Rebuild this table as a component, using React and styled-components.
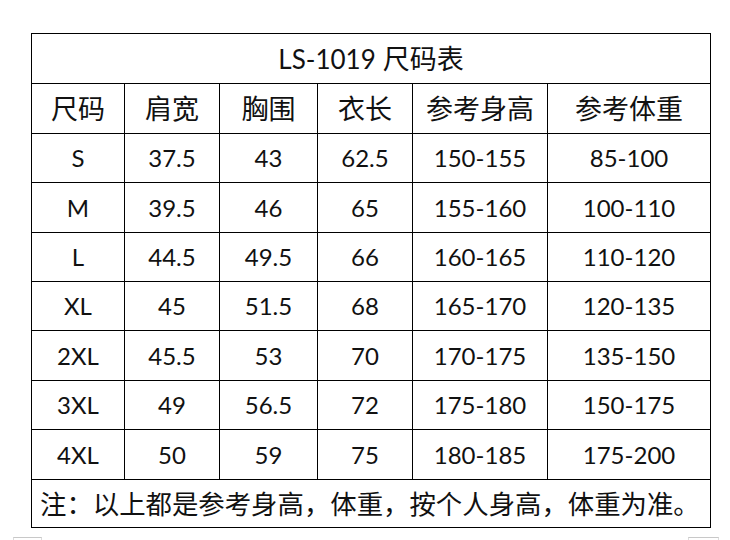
import React from "react";
import styled, { createGlobalStyle } from "styled-components";

const Global = createGlobalStyle`
  html, body { margin: 0; padding: 0; background: #ffffff; }
  body { width: 730px; height: 540px; overflow: hidden; }
`;

const Page = styled.div`
  width: 730px;
  height: 540px;
  box-sizing: border-box;
  padding: 33px 0 0 31px;
  display: flex;
  flex-direction: column;
  position: relative;
  font-family: "Lato", "Noto Sans CJK SC", sans-serif;
  color: #111;
`;

const Grid = styled.div`
  display: grid;
  width: 680px;
  box-sizing: border-box;
  grid-template-columns: 92px 94px 97px 94px 134px 162px;
  grid-template-rows: 49px 49px 48px 49px 48px 48px 49px 48px 49px 47px;
  gap: 1px;
  padding: 1px;
  background: #000;
`;

const Cell = styled.div`
  background: #fff;
  display: flex;
  align-items: center;
  justify-content: center;
  font-size: ${(p) => (p.$cjk ? "27px" : "24px")};
  line-height: 1;
  white-space: nowrap;
`;

const Title = styled.div`
  grid-column: 1 / -1;
  background: #fff;
  display: flex;
  align-items: center;
  justify-content: center;
  font-size: 26px;
  line-height: 1;
`;

const TitleCjk = styled.span`
  font-size: 27px;
  margin-left: 7px;
`;

const Note = styled.div`
  grid-column: 1 / -1;
  background: #fff;
  display: flex;
  align-items: center;
  padding-left: 8px;
  font-family: "Noto Sans CJK SC", sans-serif;
  font-size: 26.4px;
  line-height: 1;
  white-space: nowrap;
`;

const Tabs = styled.div`
  position: absolute;
  left: 0;
  right: 0;
  bottom: 0;
  height: 3px;
`;

const Tab = styled.div`
  position: absolute;
  bottom: 0;
  left: ${(p) => p.$left}px;
  width: ${(p) => p.$width}px;
  height: 2px;
  border-top: 1px solid #c8c8c8;
  border-left: 1px solid #dcdcdc;
  border-right: 1px solid #dcdcdc;
`;

const headers = ["尺码", "肩宽", "胸围", "衣长", "参考身高", "参考体重"];
const rows = [
  ["S", "37.5", "43", "62.5", "150-155", "85-100"],
  ["M", "39.5", "46", "65", "155-160", "100-110"],
  ["L", "44.5", "49.5", "66", "160-165", "110-120"],
  ["XL", "45", "51.5", "68", "165-170", "120-135"],
  ["2XL", "45.5", "53", "70", "170-175", "135-150"],
  ["3XL", "49", "56.5", "72", "175-180", "150-175"],
  ["4XL", "50", "59", "75", "180-185", "175-200"],
];

export default function App() {
  return (
    <Page>
      <Global />
      <Grid>
        <Title>
          LS-1019<TitleCjk>尺码表</TitleCjk>
        </Title>
        {headers.map((h) => (
          <Cell key={h} $cjk>
            {h}
          </Cell>
        ))}
        {rows.map((r) =>
          r.map((v, i) => <Cell key={r[0] + i}>{v}</Cell>)
        )}
        <Note>注：以上都是参考身高，体重，按个人身高，体重为准。</Note>
      </Grid>
      <Tabs>
        <Tab $left={13} $width={27} />
        <Tab $left={688} $width={29} />
      </Tabs>
    </Page>
  );
}
